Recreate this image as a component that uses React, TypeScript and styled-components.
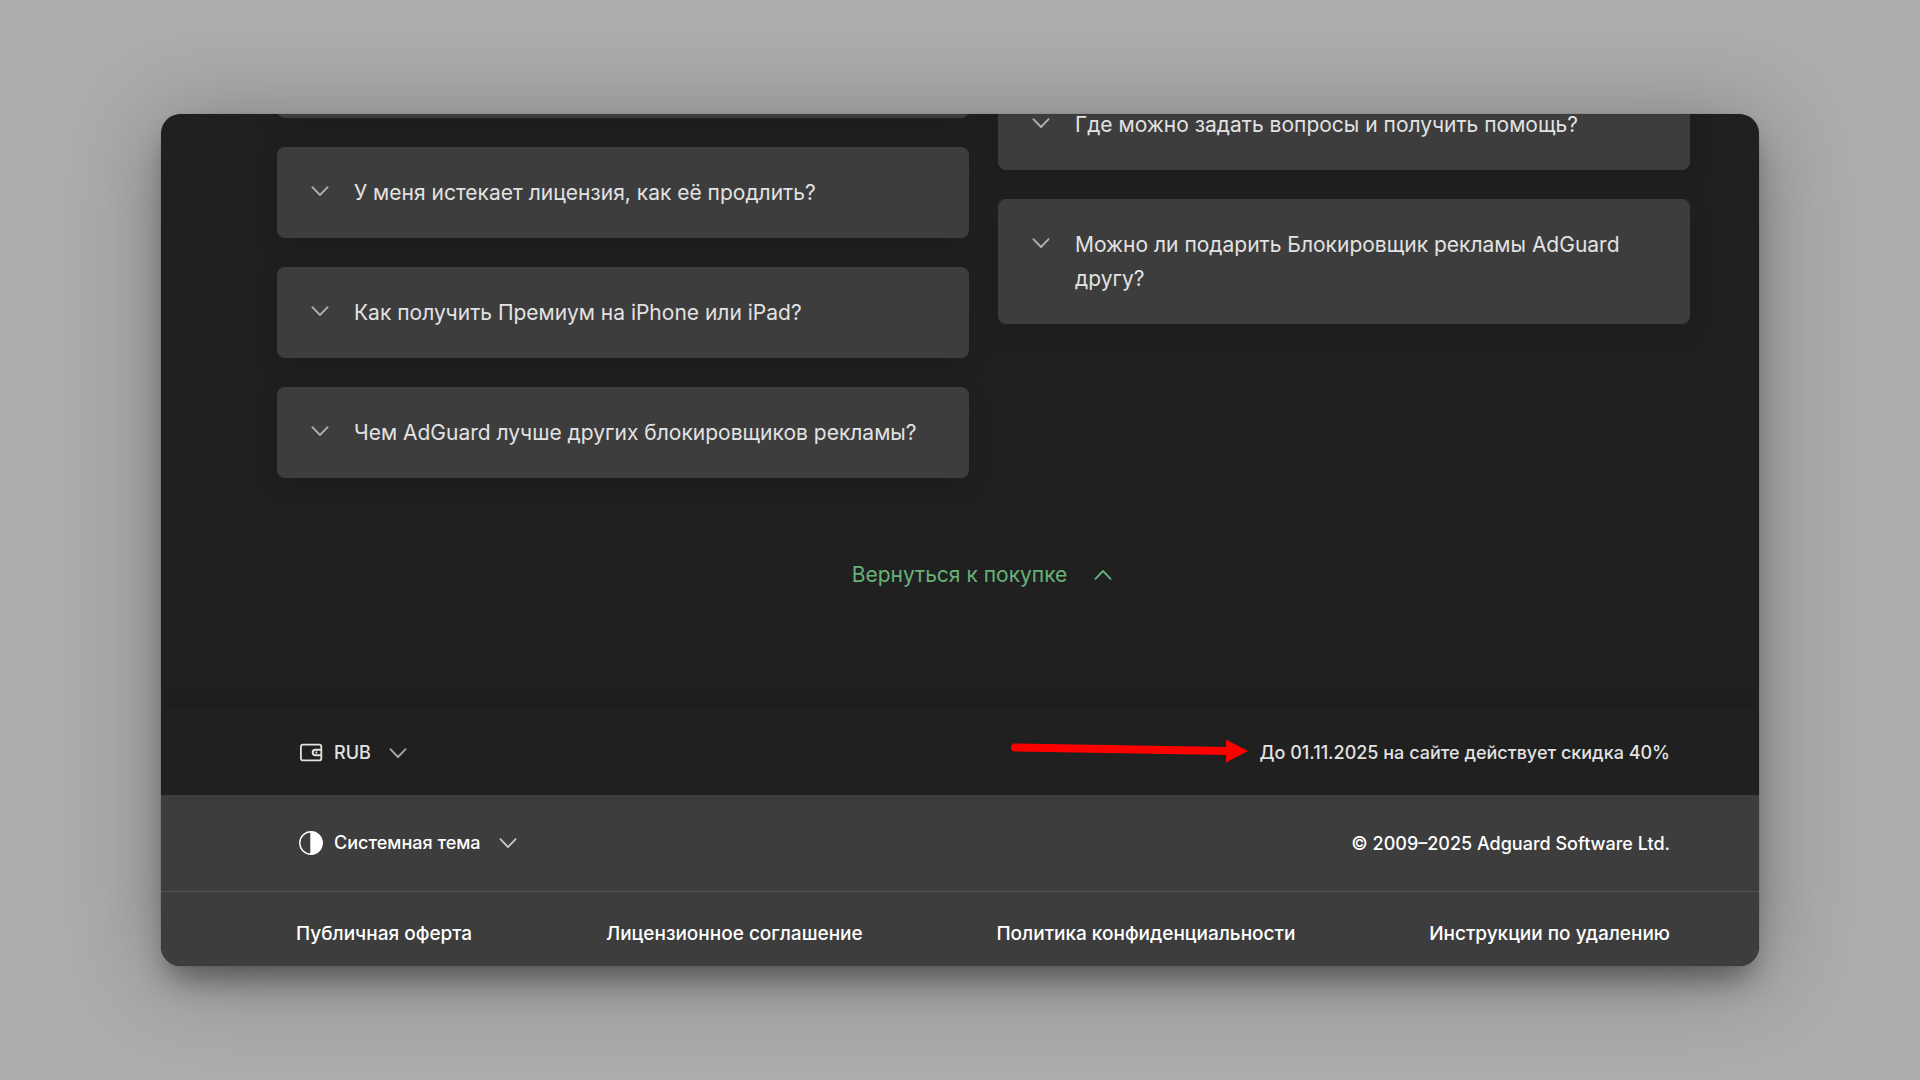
import React from "react";
import styled, { createGlobalStyle } from "styled-components";

const GlobalStyle = createGlobalStyle`
  *, *::before, *::after { box-sizing: border-box; }
  body {
    margin: 0;
    background: #acacac;
    font-family: Inter, "Noto Sans", sans-serif;
  }
`;

const Page = styled.div`
  min-height: 100vh;
  display: grid;
  align-items: center;
  padding: 40px 161px;
`;

const Window = styled.div`
  overflow: hidden;
  border-radius: 20px;
  background: #202020;
  color: #e2e2e2;
  box-shadow: 0 0 1px rgba(0, 0, 0, 0.5),
    0 20px 30px -8px rgba(0, 0, 0, 0.4),
    0 10px 90px rgba(0, 0, 0, 0.3);
`;

const Main = styled.main`
  display: flex;
  flex-direction: column;
  padding: 0 69px 116px 116px;
`;

const Columns = styled.section`
  display: grid;
  grid-template-columns: 1fr 1fr;
  align-items: start;
  gap: 29px;
`;

const Column = styled.div<{ $scrolled: number }>`
  display: flex;
  flex-direction: column;
  gap: 29px;
  margin-top: -${(p) => p.$scrolled}px;
`;

const CardTail = styled.div`
  height: 20px;
  border-radius: 8px;
  background: #3d3d3d;
  box-shadow: 0 8px 24px rgba(0, 0, 0, 0.15);
`;

const Card = styled.button`
  display: flex;
  align-items: flex-start;
  gap: 22px;
  padding: 29px 31px 28px;
  border: 0;
  border-radius: 8px;
  background: #3d3d3d;
  box-shadow: 0 8px 24px rgba(0, 0, 0, 0.15);
  color: inherit;
  font: 400 21px/34px Inter, "Noto Sans", sans-serif;
  text-align: left;
  cursor: pointer;

  svg {
    margin-top: 3px;
  }
`;

const ChevronSvg = styled.svg<{ $up?: boolean }>`
  flex: none;
  width: 24px;
  height: 24px;
  fill: none;
  stroke: currentColor;
  stroke-width: 1.8;
  stroke-linecap: round;
  stroke-linejoin: round;
  opacity: ${(p) => (p.$up ? 1 : 0.7)};
  transform: ${(p) => (p.$up ? "rotate(180deg)" : "none")};
`;

const BackLink = styled.a`
  align-self: center;
  display: flex;
  align-items: center;
  gap: 24px;
  margin-top: 80px;
  color: #67b279;
  font-size: 21px;
  line-height: 34px;
  text-decoration: none;
`;

const FooterRow = styled.div`
  display: flex;
  align-items: center;
  justify-content: space-between;
  padding: 0 89px 0 135px;
`;

const CurrencyRow = styled(FooterRow)`
  min-height: 87px;
  padding-top: 2px;
  padding-left: 138px;
  box-shadow: 0 0 24px rgba(0, 0, 0, 0.12);
  font-size: 18px;
  font-weight: 500;
`;

const ThemeRow = styled(FooterRow)`
  min-height: 97px;
  padding-left: 138px;
  border-bottom: 1px solid #555;
  background: #3d3d3d;
  color: #fff;
  font-size: 18px;
  font-weight: 500;
`;

const LinksRow = styled(FooterRow)`
  padding-top: 29px;
  padding-bottom: 19px;
  background: #3d3d3d;
`;

const FooterLink = styled.a`
  color: #fff;
  font-size: 19px;
  font-weight: 500;
  line-height: 26px;
  text-decoration: none;
`;

const Picker = styled.label`
  display: flex;
  align-items: center;
  gap: 11px;
`;

const PickerSelect = styled.select`
  appearance: none;
  margin: 0 4px 0 0;
  padding: 0;
  border: 0;
  background: transparent;
  color: inherit;
  font: inherit;
  line-height: 26px;
  cursor: pointer;
`;

const PickerIcon = styled.svg`
  flex: none;
  width: 24px;
  height: 24px;
`;

const Promo = styled.div`
  display: flex;
  align-items: center;
  gap: 11px;
`;

const ArrowSvg = styled.svg`
  flex: none;
  width: 237px;
  height: 28px;
`;

const Chevron = ({ up }: { up?: boolean }) => (
  <ChevronSvg $up={up} viewBox="0 0 24 24" aria-hidden="true">
    <path d="M4.4 8.2 12 16l7.6-7.8" />
  </ChevronSvg>
);

const Question = ({ children }: { children: string }) => (
  <Card type="button" aria-expanded="false">
    <Chevron />
    <span>{children}</span>
  </Card>
);

const WalletIcon = () => (
  <PickerIcon viewBox="0 0 24 24" fill="none" stroke="currentColor" strokeWidth="1.8" aria-hidden="true">
    <rect x="1.9" y="3.6" width="20.4" height="15.8" rx="2" />
    <path d="M22 8.800h-5.600a2.700 2.700 0 0 0 0 5.400H22" strokeWidth="2" />
    <path d="M17.400 10.400v2.200" />
  </PickerIcon>
);

const ThemeIcon = () => (
  <PickerIcon viewBox="0 0 24 24" aria-hidden="true">
    <circle cx="12" cy="12" r="11.200" fill="none" stroke="currentColor" strokeWidth="1.4" />
    <path d="M11.300.5H12a11.500 11.500 0 0 1 0 23h-.7z" fill="currentColor" />
  </PickerIcon>
);

const Arrow = () => (
  <ArrowSvg viewBox="0 0 237 28" aria-hidden="true">
    <path d="M4 8.500 216 12" stroke="#f00" strokeWidth="8" strokeLinecap="round" />
    <path d="M215 .5v23l22-11.500z" fill="#f00" />
  </ArrowSvg>
);

const leftQuestions = [
  "У меня истекает лицензия, как её продлить?",
  "Как получить Премиум на iPhone или iPad?",
  "Чем AdGuard лучше других блокировщиков рекламы?",
];

const rightQuestions = [
  "Где можно задать вопросы и получить помощь?",
  "Можно ли подарить Блокировщик рекламы AdGuard другу?",
];

const footerLinks = [
  "Публичная оферта",
  "Лицензионное соглашение",
  "Политика конфиденциальности",
  "Инструкции по удалению",
];

export default function App() {
  return (
    <>
      <GlobalStyle />
      <Page>
        <Window>
          <Main>
            <Columns>
              <Column $scrolled={16}>
                <CardTail />
                {leftQuestions.map((q) => (
                  <Question key={q}>{q}</Question>
                ))}
              </Column>
              <Column $scrolled={35}>
                {rightQuestions.map((q) => (
                  <Question key={q}>{q}</Question>
                ))}
              </Column>
            </Columns>
            <BackLink href="#buy">
              Вернуться к покупке
              <Chevron up />
            </BackLink>
          </Main>
          <footer>
            <CurrencyRow>
              <Picker>
                <WalletIcon />
                <PickerSelect name="currency">
                  <option>RUB</option>
                </PickerSelect>
                <Chevron />
              </Picker>
              <Promo>
                <Arrow />
                До 01.11.2025 на сайте действует скидка 40%
              </Promo>
            </CurrencyRow>
            <ThemeRow>
              <Picker>
                <ThemeIcon />
                <PickerSelect name="theme">
                  <option>Системная тема</option>
                </PickerSelect>
                <Chevron />
              </Picker>
              <span>© 2009–2025 Adguard Software Ltd.</span>
            </ThemeRow>
            <LinksRow as="nav">
              {footerLinks.map((text) => (
                <FooterLink key={text} href="#legal">
                  {text}
                </FooterLink>
              ))}
            </LinksRow>
          </footer>
        </Window>
      </Page>
    </>
  );
}
